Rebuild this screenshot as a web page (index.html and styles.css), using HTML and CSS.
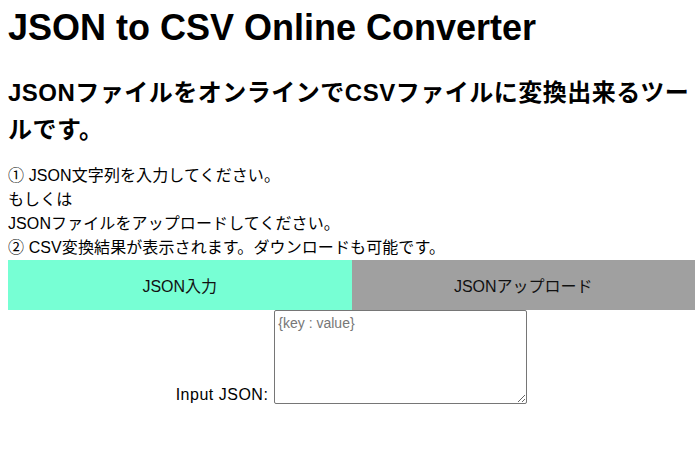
FILE: index.html
```html
<!DOCTYPE html>
<html lang="ja">
<head>
<meta charset="utf-8">
<title>JSON to CSV Online Converter</title>
<link rel="stylesheet" href="styles.css">
</head>
<body>
<h1 class="title">JSON to CSV Online Converter</h1>
<h2 class="subtitle">JSONファイルをオンラインでCSVファイルに変換出来るツールです。</h2>
<p class="steps">① JSON文字列を入力してください。<br>もしくは<br>JSONファイルをアップロードしてください。<br>② CSV変換結果が表示されます。ダウンロードも可能です。</p>
<div class="tabs">
  <div class="tab tab-active">JSON入力</div>
  <div class="tab tab-inactive">JSONアップロード</div>
</div>
<div class="input-row">
  <label class="input-label" for="json">Input JSON:</label>
  <textarea id="json" class="json-area" placeholder="{key : value}"></textarea>
</div>
</body>
</html>
```
FILE: styles.css
```css
html, body {
  background: #ffffff;
}
body {
  margin: 0 3px 0 8px;
  font-family: "Liberation Sans", "Noto Sans CJK JP", sans-serif;
  color: #000000;
}
.title {
  margin: 6px 0 0;
  font-size: 36px;
  line-height: 43px;
  font-weight: bold;
}
.subtitle {
  margin: 25px 0 0;
  font-size: 24px;
  line-height: 37px;
  font-weight: bold;
  letter-spacing: 0.5px;
}
.steps {
  margin: 16px 0 0;
  font-size: 16px;
  line-height: 24px;
  letter-spacing: 0.1px;
}
.tabs {
  margin-top: 0;
  display: flex;
  height: 50px;
}
.tab {
  flex: 1 1 0;
  display: flex;
  align-items: center;
  justify-content: center;
  font-size: 16px;
  color: #111111;
}
.tab-active {
  background: #77ffd4;
}
.tab-inactive {
  background: #a0a0a0;
}
.input-row {
  display: flex;
  justify-content: center;
  align-items: flex-end;
  gap: 6px;
}
.input-label {
  font-size: 16px;
  line-height: 18px;
  letter-spacing: 0.5px;
}
.json-area {
  box-sizing: border-box;
  width: 253px;
  height: 94px;
  margin: 0;
  padding: 3px 3px;
  border: 1px solid #767676;
  border-radius: 2px;
  font-family: "Liberation Sans", "Noto Sans CJK JP", sans-serif;
  font-size: 14px;
  line-height: 18px;
}
.json-area::placeholder {
  color: #777777;
}
```
